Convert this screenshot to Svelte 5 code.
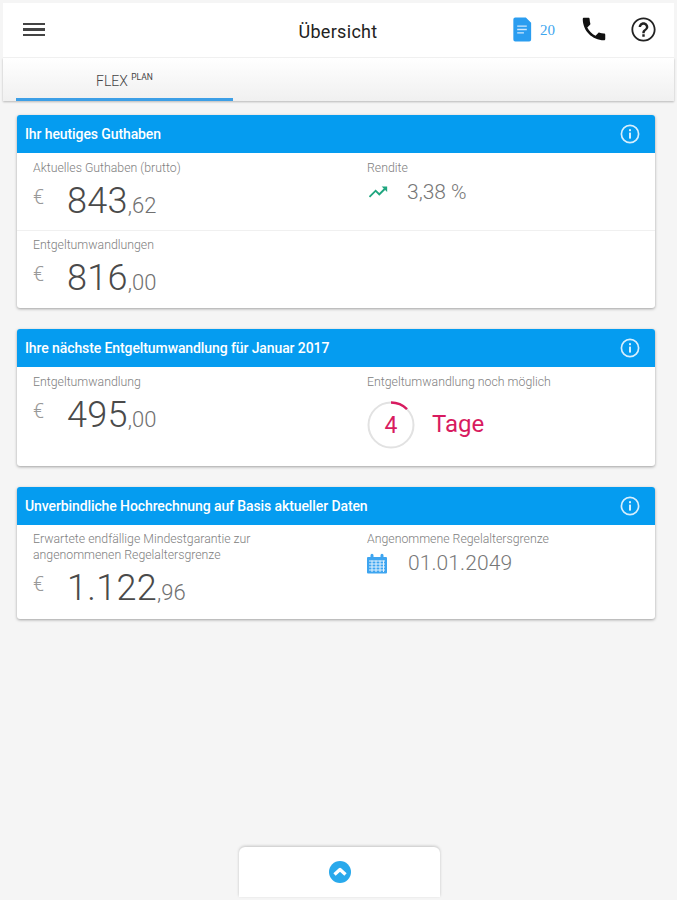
<script>
  const hero = [
    { label: 'Aktuelles Guthaben (brutto)', whole: '843', cents: '62' },
    { label: 'Entgeltumwandlungen', whole: '816', cents: '00' }
  ];
</script>

{#snippet info()}
  <svg class="info" viewBox="0 0 20 20" aria-hidden="true">
    <circle cx="10" cy="10" r="8.600" fill="none" stroke="currentColor" stroke-width="1.700" />
    <rect x="9" y="8.600" width="2" height="6" fill="currentColor" />
    <rect x="9" y="5.200" width="2" height="2" fill="currentColor" />
  </svg>
{/snippet}

{#snippet money(whole, cents)}
  <div class="money">
    <span class="euro">€</span>
    <span class="whole">{whole}</span><span class="cents">,{cents}</span>
  </div>
{/snippet}

<div class="app">
  <header class="topbar">
    <button type="button" class="menu" aria-label="Menü">
      <span></span><span></span><span></span>
    </button>
    <h1>Übersicht</h1>
    <div class="actions">
      <svg class="doc" viewBox="0 0 20 26" aria-hidden="true">
        <path d="M3 0.500h11l5.500 5.500v17.500a2 2 0 0 1-2 2H3a2 2 0 0 1-2-2V2.500a2 2 0 0 1 2-2z" fill="#2a9df0" />
        <path d="M5 9.500h10M5 13h10M5 16.500h7" stroke="#cfe8fc" stroke-width="1.400" />
      </svg>
      <span class="count">20</span>
      <svg class="phone" viewBox="0 0 24 24" aria-hidden="true">
        <path d="M6.620 10.790c1.440 2.830 3.760 5.140 6.590 6.590l2.200-2.200c.27-.27.67-.36 1.020-.24 1.120.37 2.330.57 3.570.57.550 0 1 .45 1 1V20c0 .55-.45 1-1 1-9.390 0-17-7.610-17-17 0-.55.45-1 1-1h3.500c.55 0 1 .45 1 1 0 1.250.2 2.450.57 3.570.11.350.03.740-.25 1.020l-2.200 2.200z" fill="#111" />
      </svg>
      <svg class="help" viewBox="0 0 24 24" aria-hidden="true">
        <path d="M11 18h2v-2h-2v2zm1-16C6.480 2 2 6.480 2 12s4.480 10 10 10 10-4.480 10-10S17.520 2 12 2zm0 18.500c-4.690 0-8.500-3.810-8.500-8.500S7.310 3.500 12 3.500s8.500 3.810 8.500 8.500-3.810 8.500-8.500 8.500zM12 6c-2.210 0-4 1.790-4 4h2c0-1.100.9-2 2-2s2 .9 2 2c0 2-3 1.750-3 5h2c0-2.250 3-2.500 3-5 0-2.210-1.790-4-4-4z" fill="#222" />
      </svg>
    </div>
  </header>

  <nav class="tabs">
    <div class="tab">FLEX <sup>PLAN</sup></div>
  </nav>

  <main class="cards">
    <section class="card">
      <div class="card-head">
        <h2>Ihr heutiges Guthaben</h2>
        {@render info()}
      </div>
      <div class="row first">
        <div class="cell">
          <div class="label">{hero[0].label}</div>
          {@render money(hero[0].whole, hero[0].cents)}
        </div>
        <div class="cell">
          <div class="label">Rendite</div>
          <div class="stat">
            <svg class="trend" viewBox="0 0 24 24" aria-hidden="true">
              <path d="M16 6l2.290 2.290-4.880 4.880-4-4L2 16.590 3.410 18l6-6 4 4 6.300-6.290L22 12V6z" fill="#1fa67f" />
            </svg>
            <span class="stat-text">3,38 %</span>
          </div>
        </div>
      </div>
      <div class="row second">
        <div class="cell">
          <div class="label">{hero[1].label}</div>
          {@render money(hero[1].whole, hero[1].cents)}
        </div>
      </div>
    </section>

    <section class="card">
      <div class="card-head">
        <h2>Ihre nächste Entgeltumwandlung für Januar 2017</h2>
        {@render info()}
      </div>
      <div class="row plain">
        <div class="cell">
          <div class="label">Entgeltumwandlung</div>
          {@render money('495', '00')}
        </div>
        <div class="cell">
          <div class="label">Entgeltumwandlung noch möglich</div>
          <div class="days">
            <div class="ring">
              <svg viewBox="0 0 48 48" aria-hidden="true">
                <circle cx="24" cy="24" r="22.500" fill="none" stroke="#e2e2e2" stroke-width="2" />
                <path d="M24 1.500A22.500 22.500 0 0 1 40 8.200" fill="none" stroke="#d81b60" stroke-width="2.400" />
              </svg>
              <span>4</span>
            </div>
            <span class="days-text">Tage</span>
          </div>
        </div>
      </div>
    </section>

    <section class="card">
      <div class="card-head">
        <h2>Unverbindliche Hochrechnung auf Basis aktueller Daten</h2>
        {@render info()}
      </div>
      <div class="row plain tight">
        <div class="cell">
          <div class="label">Erwartete endfällige Mindestgarantie zur<br />angenommenen Regelaltersgrenze</div>
          {@render money('1.122', '96')}
        </div>
        <div class="cell">
          <div class="label">Angenommene Regelaltersgrenze</div>
          <div class="stat date">
            <svg class="cal" viewBox="0 0 22 22" aria-hidden="true">
              <path d="M2 4.500h2.500V2.800a1.500 1.500 0 0 1 3 0v1.700h7V2.800a1.500 1.500 0 0 1 3 0v1.700H20a1 1 0 0 1 1 1V20a1 1 0 0 1-1 1H2a1 1 0 0 1-1-1V5.500a1 1 0 0 1 1-1z" fill="#3ea5f0" />
              <path d="M3 8.500h16M3 11.500h16M3 14.500h16M3 17.500h16M6 8v11.500M10 8v11.500M14 8v11.500M17.500 8v11.500" stroke="#e3f2fd" stroke-width="1" />
            </svg>
            <span class="stat-text">01.01.2049</span>
          </div>
        </div>
      </div>
    </section>
  </main>

  <button type="button" class="pull" aria-label="Nach oben">
    <svg viewBox="0 0 24 24" aria-hidden="true">
      <circle cx="12" cy="12" r="11" fill="#29a9ec" />
      <path d="M6.500 14.500L12 9.500l5.500 5" fill="none" stroke="#fff" stroke-width="3.400" stroke-linejoin="round" />
    </svg>
  </button>
</div>

<style>
  :global(body) {
    background: #f5f5f5;
    font-family: Roboto, "Liberation Sans", sans-serif;
  }

  .app {
    box-sizing: border-box;
    width: 671px;
    height: 894px;
    margin: 3px;
    display: flex;
    flex-direction: column;
    color: #666;
  }

  .topbar {
    flex: none;
    height: 54px;
    background: #fff;
    display: flex;
    align-items: center;
    position: relative;
    box-shadow: 0 1px 0 #f0f0f0;
  }
  .menu {
    appearance: none;
    border: 0;
    padding: 0;
    margin: -1px 0 0 20px;
    background: none;
    width: 22px;
    display: flex;
    flex-direction: column;
    gap: 3px;
  }
  .menu span {
    height: 2.500px;
    background: #444;
  }
  .topbar h1 {
    position: absolute;
    left: 0;
    right: 0;
    top: 18px;
    margin: 0 0 0 -1px;
    text-align: center;
    font-size: 18px;
    line-height: 21px;
    font-weight: 400;
    color: #222;
    letter-spacing: 0.3px;
  }
  .actions {
    margin-left: auto;
    display: flex;
    align-items: center;
    position: relative;
    z-index: 1;
    margin-top: -1px;
  }
  .doc {
    width: 20px;
    height: 25px;
    margin-right: 8px;
  }
  .count {
    font-family: "Liberation Serif", serif;
    font-size: 15px;
    color: #3da5ee;
    width: 39px;
    margin-top: 1px;
  }
  .phone {
    width: 30px;
    height: 30px;
    margin-right: 20px;
    margin-top: -2px;
  }
  .help {
    width: 29px;
    height: 29px;
    margin-right: 16px;
  }

  .tabs {
    flex: none;
    height: 43px;
    margin-top: 1px;
    background: linear-gradient(#fff, #f0f0f0);
    box-shadow: 0 1px 2px rgba(0, 0, 0, 0.25);
    padding-left: 13px;
    display: flex;
  }
  .tab {
    box-sizing: border-box;
    width: 217px;
    height: 43px;
    border-bottom: 3px solid #3d9fe6;
    padding: 14px 0 0 80px;
    font-size: 14px;
    line-height: 18px;
    font-weight: 300;
    color: #444;
  }
  .tab sup {
    font-size: 8.500px;
    line-height: 0;
    vertical-align: 6px;
    font-weight: 400;
  }

  .cards {
    flex: none;
    padding: 14px 19px 0 14px;
    display: flex;
    flex-direction: column;
    gap: 21px;
  }
  .card {
    background: #fff;
    border-radius: 3px;
    box-shadow: 0 1px 3px rgba(0, 0, 0, 0.35);
    overflow: hidden;
  }
  .card-head {
    height: 38px;
    padding: 0 15px 0 8px;
    background: #059cf0;
    color: #fff;
    display: flex;
    align-items: center;
    justify-content: space-between;
  }
  .card-head h2 {
    margin: 0;
    font-size: 14px;
    font-weight: 500;
    letter-spacing: -0.1px;
  }
  .info {
    width: 20px;
    height: 20px;
    color: #d6eefd;
  }

  .row {
    display: grid;
    grid-template-columns: 334px 1fr;
    padding-left: 16px;
  }
  .row.first {
    height: 78px;
    padding-top: 7px;
    box-sizing: border-box;
    border-bottom: 1px solid #f0f0f0;
  }
  .row.second {
    height: 77px;
    padding-top: 6px;
    box-sizing: border-box;
  }
  .row.plain {
    height: 99px;
    padding-top: 7px;
    box-sizing: border-box;
  }
  .row.tight {
    height: 94px;
    padding-top: 6px;
  }

  .label {
    font-size: 12.300px;
    line-height: 16px;
    font-weight: 300;
    color: #808080;
  }

  .money {
    display: flex;
    align-items: baseline;
    color: #4a4a4a;
    margin-top: 6px;
    height: 38px;
  }
  .euro {
    font-size: 20px;
    font-weight: 300;
    color: #999;
    width: 34px;
    position: relative;
    top: -9px;
  }
  .whole {
    font-size: 36px;
    line-height: 38px;
    font-weight: 300;
    letter-spacing: 0.3px;
  }
  .cents {
    font-size: 22px;
    font-weight: 300;
    color: #707070;
  }

  .stat {
    display: flex;
    align-items: center;
    height: 26px;
    margin-top: 3px;
  }
  .trend {
    width: 22px;
    height: 22px;
    margin-right: 18px;
  }
  .cal {
    width: 22px;
    height: 23px;
    margin-right: 19px;
    margin-left: -1px;
  }
  .stat-text {
    font-size: 21px;
    font-weight: 300;
    color: #777;
  }
  .date .stat-text {
    letter-spacing: 0.1px;
    margin-left: 1px;
  }

  .days {
    display: flex;
    align-items: center;
    margin-top: 11px;
  }
  .ring {
    position: relative;
    width: 48px;
    height: 48px;
    margin-right: 17px;
    color: #d81b60;
    font-size: 23px;
  }
  .ring svg {
    display: block;
    width: 48px;
    height: 48px;
  }
  .ring span {
    position: absolute;
    inset: 0;
    display: flex;
    align-items: center;
    justify-content: center;
    font-weight: 400;
  }
  .days-text {
    font-size: 24px;
    color: #d81b60;
    font-weight: 400;
    margin-top: -2px;
  }

  .pull {
    appearance: none;
    border: 0;
    padding: 8px 0 0;
    margin: auto 0 0 236px;
    width: 201px;
    height: 50px;
    background: #fff;
    border-radius: 6px 6px 0 0;
    box-shadow: 0 -1px 3px rgba(0, 0, 0, 0.2);
    display: flex;
    justify-content: center;
    align-items: flex-start;
  }
  .pull svg {
    width: 24px;
    height: 24px;
    margin-top: 5px;
  }
</style>
